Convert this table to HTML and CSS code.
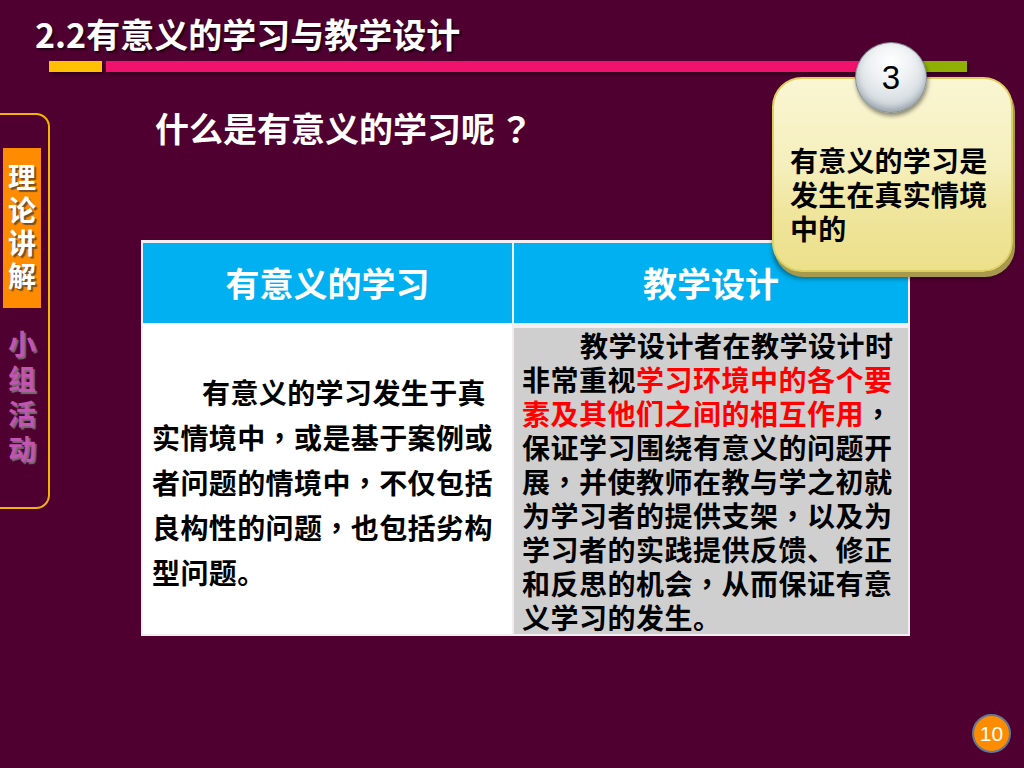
FILE: index.html
```html
<!DOCTYPE html>
<html lang="zh-CN">
<head>
<meta charset="utf-8">
<title>2.2有意义的学习与教学设计</title>
<link rel="stylesheet" href="styles.css">
</head>
<body>
<div class="slide">
  <header class="head">
    <h1 class="title">2.2有意义的学习与教学设计</h1>
    <div class="bars">
      <span class="bar bar-yellow"></span>
      <span class="bar bar-pink"></span>
      <span class="bar bar-green"></span>
    </div>
  </header>

  <div class="body">
    <nav class="sidebar">
      <div class="tab tab-active">理论讲解</div>
      <div class="tab tab-idle">小组活动</div>
    </nav>

    <main class="main">
      <h2 class="question">什么是有意义的学习呢<span class="qm" lang="zh-TW">？</span></h2>
      <div class="table">
        <div class="th">有意义的学习</div>
        <div class="th">教学设计</div>
        <div class="td td-left"><p>有意义的学习发生于真实情境中<span lang="zh-TW">，</span>或是基于案例或者问题的情境中<span lang="zh-TW">，</span>不仅包括良构性的问题<span lang="zh-TW">，</span>也包括劣构型问题。</p></div>
        <div class="td td-right"><p>教学设计者在教学设计时非常重视<span class="red">学习环境中的各个要素及其他们之间的相互作用</span><span lang="zh-TW">，</span>保证学习围绕有意义的问题开展<span lang="zh-TW">，</span>并使教师在教与学之初就为学习者的提供支架<span lang="zh-TW">，</span>以及为学习者的实践提供反馈、修正和反思的机会<span lang="zh-TW">，</span>从而保证有意义学习的发生。</p></div>
      </div>
    </main>
  </div>

  <aside class="callout">
    <p>有意义的学习是发生在真实情境中的</p>
  </aside>
  <div class="badge">3</div>
  <div class="page-num">10</div>
</div>
</body>
</html>
```

FILE: styles.css
```css
* { box-sizing: border-box; }

html, body {
  margin: 0;
  padding: 0;
  background: #4f0030;
}

.slide {
  position: relative;
  width: 1024px;
  height: 768px;
  overflow: hidden;
  background: #4f0030;
  font-family: "Noto Sans CJK SC", "Liberation Sans", sans-serif;
  display: flex;
  flex-direction: column;
}

/* ---------- header ---------- */
.head {
  padding-top: 13px;
}

.title {
  margin: 0 0 0 35px;
  font-size: 34px;
  line-height: 42px;
  font-weight: 700;
  color: #ffffff;
  text-shadow: 2px 2px 2px rgba(0, 0, 0, 0.6);
}

.bars {
  display: flex;
  margin-top: 6px;
  margin-left: 49px;
  height: 11px;
}

.bar {
  display: block;
  height: 11px;
  box-shadow: 2px 3px 3px rgba(0, 0, 0, 0.35);
}

.bar-yellow { width: 53px; background: #ffc000; margin-right: 4px; }
.bar-pink   { width: 817px; background: #f0126d; }
.bar-green  { width: 44px; background: #8fb000; }

/* ---------- body ---------- */
.body {
  display: flex;
  align-items: flex-start;
}

.sidebar {
  margin-top: 41px;
  margin-left: -14px;
  width: 64px;
  height: 396px;
  border: 2px solid #f2b400;
  border-radius: 14px;
  padding-top: 33px;
  display: flex;
  flex-direction: column;
  align-items: flex-start;
}

.tab {
  width: 38px;
  margin-left: 15px;
  font-size: 28px;
  font-weight: 700;
  text-align: center;
  word-break: break-all;
}

.tab-active {
  background: #ff8c00;
  color: #ffffff;
  padding: 12px 0 0;
  line-height: 33px;
  height: 160px;
  text-shadow: 2px 2px 1px rgba(90, 70, 50, 0.85);
}

.tab-idle {
  margin-top: 18px;
  color: #c254b2;
  line-height: 35px;
  text-shadow: 2px 2px 1px #7a6a74;
}

.main {
  display: flex;
  flex-direction: column;
  align-items: flex-start;
}

.question {
  margin: 35px 0 0 105px;
  font-size: 34px;
  line-height: 42px;
  font-weight: 700;
  color: #ffffff;
}

.qm { margin-left: 4px; }

.table {
  margin-top: 91px;
  margin-left: 91px;
  display: grid;
  grid-template-columns: 369px 394px;
  grid-template-rows: 80px 306px;
  column-gap: 2px;
  row-gap: 5px;
  padding: 3px 2px 2px 2px;
  background: #f3eef0;
}

.th {
  background: #00b0f0;
  color: #ffffff;
  font-size: 34px;
  font-weight: 700;
  display: flex;
  align-items: center;
  justify-content: center;
  padding-bottom: 2px;
}

.td {
  font-size: 28px;
  font-weight: 700;
  color: #000000;
}

.td p { margin: 0; }

.td-left {
  background: #ffffff;
  margin-top: -5px;
  padding: 0 15px 0 9px;
  display: flex;
  align-items: center;
  line-height: 45px;
  letter-spacing: 0.4px;
}

.td-left p {
  text-indent: 50px;
  padding-top: 8px;
}

.td-right {
  background: #d0cfcf;
  padding: 0 8px 0 8px;
  line-height: 34px;
  letter-spacing: 0.5px;
}

.td-right p { text-indent: 58px; }

.red { color: #ff0000; }

/* ---------- overlays ---------- */
.callout {
  position: absolute;
  left: 772px;
  top: 77px;
  width: 241px;
  height: 195px;
  border-radius: 30px;
  border: 2px solid #ddd062;
  background: linear-gradient(180deg, #faf6d2 0%, #f5efbd 45%, #efe59c 70%, #ece08a 100%);
  box-shadow: 2px 5px 0 #a89a4c, 0 7px 4px rgba(0, 0, 0, 0.35);
  padding: 64px 12px 0 16px;
}

.callout p {
  margin: 0;
  font-size: 28px;
  line-height: 34px;
  font-weight: 700;
  color: #000000;
  letter-spacing: 0.2px;
}

.badge {
  position: absolute;
  left: 855px;
  top: 42px;
  width: 72px;
  height: 71px;
  border-radius: 50%;
  border: 1px solid #7f8a92;
  background: radial-gradient(circle at 50% 28%, #ffffff 0%, #eef1f3 35%, #d3dadf 70%, #aab4bb 100%);
  box-shadow: 1px 3px 4px rgba(0, 0, 0, 0.45), inset 0 -4px 6px rgba(120, 130, 140, 0.5);
  display: flex;
  align-items: center;
  justify-content: center;
  font-family: "Liberation Sans", Arial, sans-serif;
  font-size: 33px;
  color: #000000;
}

.page-num {
  position: absolute;
  left: 972px;
  top: 714px;
  width: 39px;
  height: 39px;
  border-radius: 50%;
  background: #ff8c00;
  border: 2px solid #5f7a9a;
  color: #ffffff;
  font-family: "Liberation Sans", Arial, sans-serif;
  font-size: 21px;
  display: flex;
  align-items: center;
  justify-content: center;
}
```
